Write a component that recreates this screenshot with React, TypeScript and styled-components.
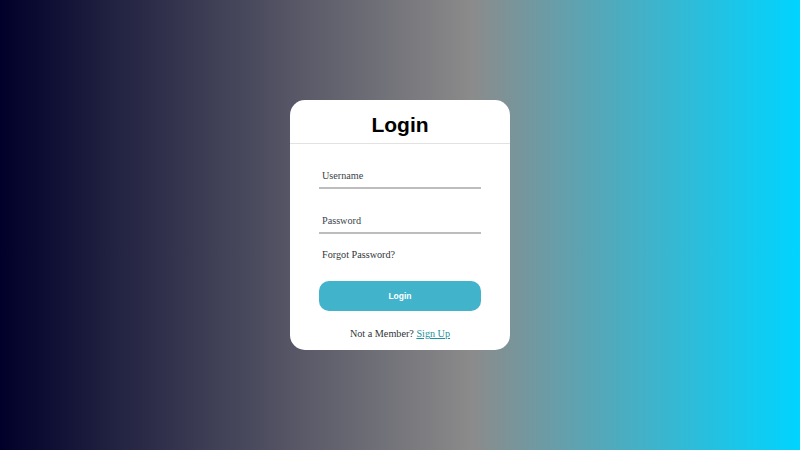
import React from 'react';
import styled, { createGlobalStyle } from 'styled-components';

const GlobalStyle = createGlobalStyle`
  html, body {
    margin: 0;
    padding: 0;
  }
  body {
    font-family: "Liberation Serif", serif;
  }
`;

const Page = styled.div`
  width: 100vw;
  height: 100vh;
  display: flex;
  align-items: center;
  justify-content: center;
  background: linear-gradient(90deg, #00002a 0%, #8b8b8b 59%, #00d4ff 100%);
`;

const Card = styled.div`
  width: 220px;
  height: 250px;
  box-sizing: border-box;
  background: #fff;
  border-radius: 15px;
  display: flex;
  flex-direction: column;
`;

const Header = styled.h1`
  margin: 0;
  height: 44px;
  box-sizing: border-box;
  border-bottom: 1px solid #e2e2e2;
  display: flex;
  align-items: center;
  justify-content: center;
  font-family: "Liberation Sans", Arial, sans-serif;
  font-size: 21px;
  font-weight: bold;
  color: #000;
  padding-top: 6px;
`;

const Form = styled.form`
  display: flex;
  flex-direction: column;
  padding: 21px 29px 0;
`;

const Field = styled.input<{ $gap?: number }>`
  height: 24px;
  margin-top: ${(p) => p.$gap ?? 0}px;
  box-sizing: border-box;
  border: none;
  border-bottom: 2px solid #bdbdbd;
  outline: none;
  padding: 0 3px 2px;
  font-family: "Liberation Serif", serif;
  font-size: 10.2px;
  color: #2f3a40;
  background: transparent;

  &::placeholder {
    color: #3a454b;
  }
`;

const Forgot = styled.a`
  margin-top: 14px;
  padding-left: 3px;
  font-size: 10.2px;
  line-height: 14px;
  color: #2f3537;
  text-decoration: none;
`;

const Button = styled.button`
  margin-top: 19px;
  height: 30px;
  border: none;
  border-radius: 10px;
  background: #41b3cb;
  color: #fff;
  font-family: "Liberation Sans", Arial, sans-serif;
  font-size: 8.5px;
  font-weight: bold;
`;

const Footer = styled.p`
  margin: 16px 0 0;
  text-align: center;
  font-size: 10.2px;
  line-height: 14px;
  color: #2f3537;
`;

const SignUp = styled.a`
  color: #23909d;
  text-decoration: underline;
`;

export default function App() {
  return (
    <>
      <GlobalStyle />
      <Page>
        <Card>
          <Header>Login</Header>
          <Form onSubmit={(e) => e.preventDefault()}>
            <Field type="text" placeholder="Username" />
            <Field type="password" placeholder="Password" $gap={21} />
            <Forgot href="#">Forgot Password?</Forgot>
            <Button type="submit">Login</Button>
            <Footer>
              Not a Member? <SignUp href="#">Sign Up</SignUp>
            </Footer>
          </Form>
        </Card>
      </Page>
    </>
  );
}
